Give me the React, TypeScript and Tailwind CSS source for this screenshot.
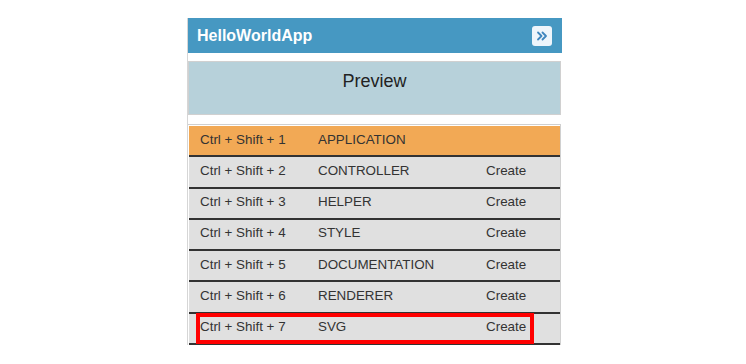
const rows = [
  { keys: "Ctrl + Shift + 1", name: "APPLICATION", action: "" },
  { keys: "Ctrl + Shift + 2", name: "CONTROLLER", action: "Create" },
  { keys: "Ctrl + Shift + 3", name: "HELPER", action: "Create" },
  { keys: "Ctrl + Shift + 4", name: "STYLE", action: "Create" },
  { keys: "Ctrl + Shift + 5", name: "DOCUMENTATION", action: "Create" },
  { keys: "Ctrl + Shift + 6", name: "RENDERER", action: "Create" },
  { keys: "Ctrl + Shift + 7", name: "SVG", action: "Create" },
];

export default function App() {
  return (
    <div className="min-h-screen w-full bg-white pt-[18px] font-['Liberation_Sans',Arial,sans-serif]">
      <div className="ml-[187px] w-[375px] border-l border-[#d6d6d6]">
        <div className="flex h-[35px] items-center justify-between bg-[#4698c2] pl-[9px] pr-[9px]">
          <span className="text-[16px] font-bold text-white">HelloWorldApp</span>
          <div className="mr-[1px] flex h-[20px] w-[20px] items-center justify-center rounded-[3px] bg-[#eef5fb]">
            <svg width="12" height="12" viewBox="0 0 12 12" fill="none" stroke="#3f86be" strokeWidth="1.8" strokeLinecap="round" strokeLinejoin="round">
              <path d="M2 2.5 L5.5 6 L2 9.5" />
              <path d="M6.5 2.5 L10 6 L6.5 9.5" />
            </svg>
          </div>
        </div>
        <div className="mt-[8px] flex h-[54px] w-[373px] justify-center border border-[#d0d0d0] bg-[#b7d1da] pt-[8px]">
          <span className="text-[18px] leading-[22px] text-[#222]">Preview</span>
        </div>
        <div className="mt-[9px] w-[373px] border-t border-r border-[#d0d0d0] pt-[1px] pl-[1px]">
          {rows.map((r, i) => (
            <div
              key={r.keys}
              className={
                "relative flex h-[31.25px] items-center border-b-2 border-[#333] pb-[2px] text-[13.4px] text-[#333] " +
                (i === 0 ? "bg-[#f2a955]" : "bg-[#e0e0e0]")
              }
            >
              <span className="w-[117px] pl-[11px]">{r.keys}</span>
              <span className="w-[168px] pl-[12px]">{r.name}</span>
              <span className="pl-[12px]">{r.action}</span>
              {i === rows.length - 1 && (
                <div className="pointer-events-none absolute left-[7px] top-[-1px] h-[31px] w-[338px] border-4 border-[#ff0000]" />
              )}
            </div>
          ))}
        </div>
      </div>
    </div>
  );
}
